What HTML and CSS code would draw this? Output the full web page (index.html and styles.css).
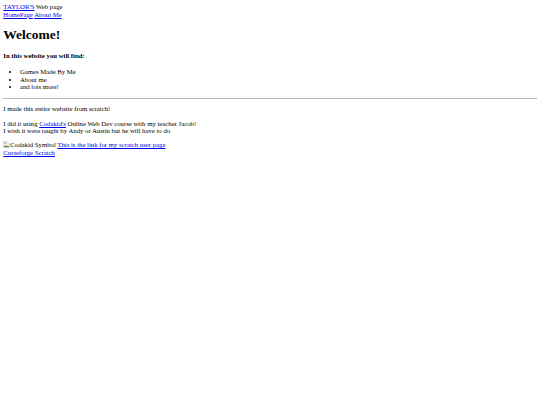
FILE: index.html
```html
<!DOCTYPE html>
<html>
<head>
<meta charset="utf-8">
<title>Taylor's Web page</title>
<link rel="stylesheet" href="styles.css">
</head>
<body>
<div class="top"><a href="#">TAYLOR'S</a> Web page</div>
<nav class="nav"><a href="#">HomePage</a> <a href="#">About Me</a></nav>
<h1 class="title">Welcome!</h1>
<h4 class="sub">In this website you will find:</h4>
<ul class="list">
<li>Games Made By Me</li>
<li>About me</li>
<li>and lots more!</li>
</ul>
<hr class="rule">
<p class="para">I made this entire website from scratch!</p>
<p class="para">I did it using <a href="#">Codakid's</a> Online Web Dev course with my teacher Jacob!<br>I wish it were taught by Andy or Austin but he will have to do</p>
<div class="links"><span class="broken"><svg class="bicon" width="7" height="7" viewBox="0 0 16 16"><path d="M1.5 1.5h9l4 4v9h-13z" fill="#eef2ee" stroke="#9aa"/><path d="M2 13l4-4 3 3 2-2 3 3v1.5H2z" fill="#5a9a4a"/><circle cx="5" cy="5" r="1.6" fill="#4a8ac8"/></svg>Codakid Symbol</span> <a href="#">This is the link for my scratch user page</a><br><a href="#">Curseforge Scratch</a></div>
</body>
</html>
```
FILE: styles.css
```css
html { background: #fff; }
body {
  margin: 3.32px;
  font-family: "Liberation Serif", "Times New Roman", serif;
  font-size: 6.74px;
  line-height: 7.64px;
  color: #000;
}
a { color: #0000ee; text-decoration: underline; }
.title {
  font-size: 13.5px;
  line-height: 15.27px;
  margin: 8.9px 0;
  font-weight: bold;
}
.sub {
  font-size: 6.74px;
  line-height: 7.64px;
  margin: 8.83px 0;
  font-weight: bold;
}
.list {
  margin: 6.64px 0;
  padding-left: 16.6px;
}
.rule {
  margin: 3.32px 0;
  border: none;
  border-top: 1px solid #b8b8b8;
  height: 0;
}
.para { margin: 6.64px 0; }
.links { margin: 0; }
.broken { display: inline; }
.bicon { vertical-align: -1px; }
```
